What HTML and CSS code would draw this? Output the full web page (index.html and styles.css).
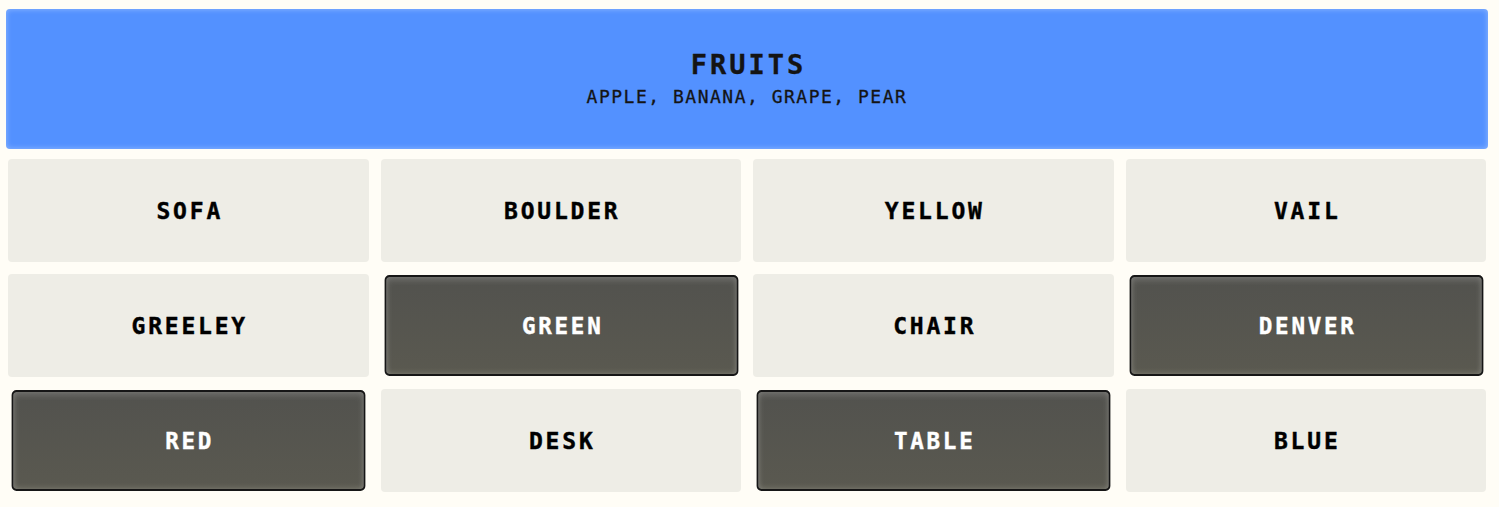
FILE: index.html
```html
<!DOCTYPE html>
<html lang="en">
<head>
<meta charset="utf-8">
<title>Connections</title>
<link rel="stylesheet" href="styles.css">
</head>
<body>
<main class="board">
  <section class="solved solved-blue">
    <h2 class="solved-title">FRUITS</h2>
    <p class="solved-words">APPLE, BANANA, GRAPE, PEAR</p>
  </section>
  <div class="grid">
    <button class="tile">SOFA</button>
    <button class="tile">BOULDER</button>
    <button class="tile">YELLOW</button>
    <button class="tile">VAIL</button>
    <button class="tile">GREELEY</button>
    <button class="tile selected">GREEN</button>
    <button class="tile">CHAIR</button>
    <button class="tile selected">DENVER</button>
    <button class="tile selected">RED</button>
    <button class="tile">DESK</button>
    <button class="tile selected">TABLE</button>
    <button class="tile">BLUE</button>
  </div>
</main>
</body>
</html>
```

FILE: styles.css
```css
html, body {
  margin: 0;
  padding: 0;
  background: #fffdf6;
}

.board {
  width: 1478px;
  padding: 9px 0 0 8px;
  display: flex;
  flex-direction: column;
  gap: 10px;
  font-family: "DejaVu Sans Mono", "Liberation Mono", monospace;
}

.solved {
  margin: 0 -2px;
  height: 140px;
  border-radius: 4px;
  display: flex;
  flex-direction: column;
  align-items: center;
  justify-content: center;
  gap: 6px;
}

.solved-blue {
  background: #5391ff;
  box-shadow: inset 0 0 5px 1px rgba(255, 255, 255, 0.28);
}

.solved-title {
  margin: 0;
  font-size: 27px;
  font-weight: bold;
  letter-spacing: 3px;
  color: #141414;
  line-height: 30px;
  padding-left: 3px;
  -webkit-text-stroke: 0.3px #141414;
}

.solved-words {
  margin: 0;
  font-size: 18px;
  letter-spacing: 1.5px;
  color: #141414;
  line-height: 22px;
  -webkit-text-stroke: 0.3px #141414;
}

.grid {
  display: grid;
  grid-template-columns: repeat(4, 1fr);
  grid-auto-rows: 103px;
  gap: 12px;
}

.tile {
  border: none;
  border-radius: 4px;
  background: #eeede6;
  color: #000;
  font-family: "DejaVu Sans Mono", "Liberation Mono", monospace;
  font-size: 23px;
  font-weight: bold;
  letter-spacing: 2.8px;
  padding: 0 0 0 3px;
  display: flex;
  align-items: center;
  justify-content: center;
  -webkit-text-stroke: 0.4px #000;
}

.tile.selected {
  background: linear-gradient(#52524e, #5a5950);
  color: #fff;
  -webkit-text-stroke: 0.4px #fff;
  border: 2px solid #161616;
  border-radius: 5px;
  transform: scale(0.98);
  box-shadow: inset 0 3px 6px rgba(255, 255, 255, 0.18), inset 0 -2px 5px rgba(255, 255, 240, 0.12);
}
```
